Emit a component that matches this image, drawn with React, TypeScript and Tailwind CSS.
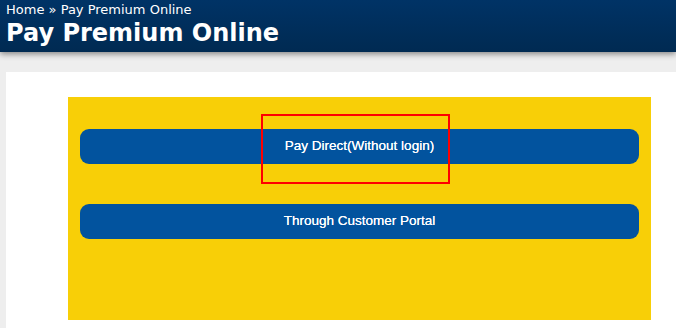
export default function App() {
  return (
    <div className="min-h-[328px] bg-[#eeeeee] font-['DejaVu_Sans',Verdana,sans-serif]">
      {/* Page header */}
      <div className="h-[52px] bg-gradient-to-b from-[#003366] to-[#002a52] px-[6px] pt-[2px] text-white shadow-[0_2px_6px_rgba(0,0,0,0.45)]">
        <div className="text-[13px] leading-[16px]">
          Home <span>»</span> Pay Premium Online
        </div>
        <h1 className="text-[24px] font-bold leading-[30px]">Pay Premium Online</h1>
      </div>

      <div className="pt-[20px] pl-[6px]">
        <div className="bg-white pl-[62px] pr-[25px] pt-[25px] pb-[8px]">
          <div className="relative h-[223px] bg-[#f8cf07] px-[12px] pt-[32px] font-['Liberation_Sans',Arial,sans-serif]">
            <button className="flex h-[35px] w-full items-center justify-center rounded-[9px] bg-[#02539e] text-[13.5px] text-white [text-shadow:0_0_0.4px_#fff]">
              Pay Direct(Without login)
            </button>
            <button className="mt-[40px] flex h-[35px] w-full items-center justify-center rounded-[9px] bg-[#02539e] text-[13.5px] text-white [text-shadow:0_0_0.4px_#fff]">
              Through Customer Portal
            </button>
            {/* highlight marker */}
            <div className="absolute left-[193px] top-[17px] h-[70px] w-[189px] border-2 border-[#ff0000]" />
          </div>
        </div>
      </div>
    </div>
  )
}
